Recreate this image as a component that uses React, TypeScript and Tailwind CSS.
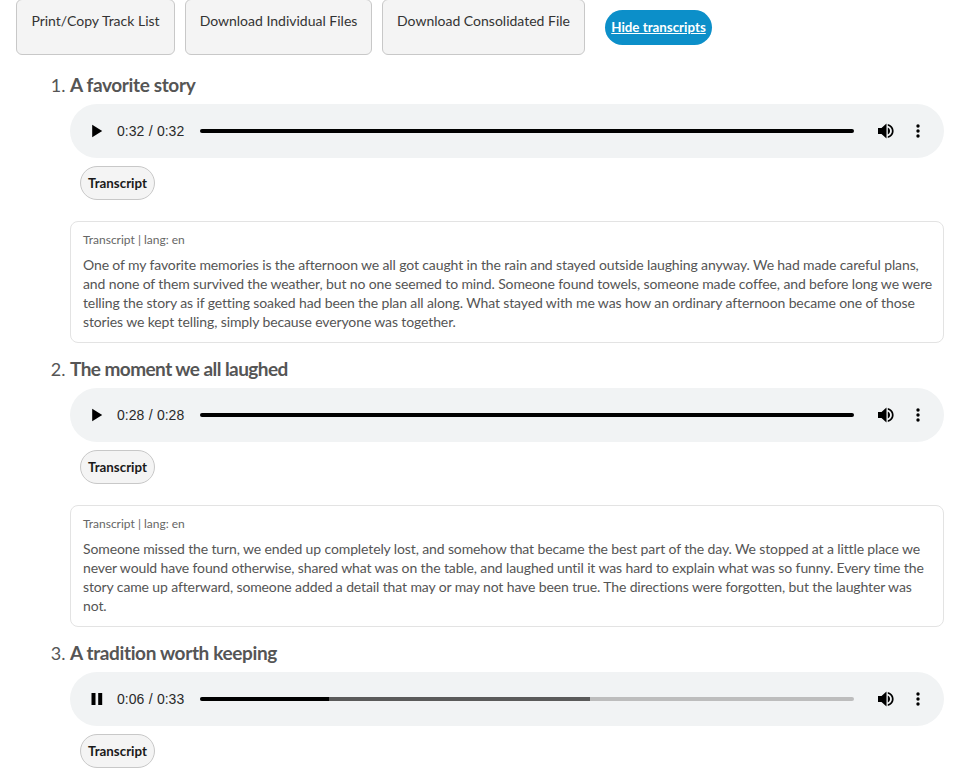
const btn = "h-14 pt-[12px] self-start flex justify-center items-start whitespace-nowrap bg-[#f4f4f4] border border-[#c8c8c8] rounded-[6px] text-[14px] leading-[18px] text-[#333333]";

function Play() {
  return (
    <svg width="12" height="14" viewBox="0 0 12 14" className="shrink-0">
      <path d="M1.2 0.8 L11.2 7 L1.2 13.2 Z" fill="#000" />
    </svg>
  );
}
function Pause() {
  return (
    <svg width="12" height="14" viewBox="0 0 12 14" className="shrink-0">
      <path d="M0.5 1 H4.5 V13 H0.5 Z M7.2 1 H11.2 V13 H7.2 Z" fill="#000" />
    </svg>
  );
}
function Volume() {
  return (
    <svg width="18" height="18" viewBox="0 0 18 18" className="shrink-0">
      <path d="M1 6 H4.5 L9.5 1.5 V16.5 L4.5 12 H1 Z" fill="#000" />
      <path d="M10.8 5.4 C12.4 6.3 13 7.6 13 9 C13 10.4 12.4 11.7 10.8 12.6 Z" fill="#000" />
      <path d="M10.8 2 C14.3 2.8 16.6 5.6 16.6 9 C16.6 12.4 14.3 15.2 10.8 16 V14.2 C13.3 13.4 14.9 11.4 14.9 9 C14.9 6.6 13.3 4.6 10.8 3.8 Z" fill="#000" />
    </svg>
  );
}
function Dots() {
  return (
    <svg width="4" height="14" viewBox="0 0 4 14" className="shrink-0">
      <circle cx="2" cy="2" r="1.7" fill="#000" />
      <circle cx="2" cy="7" r="1.7" fill="#000" />
      <circle cx="2" cy="12" r="1.7" fill="#000" />
    </svg>
  );
}

function Player({ time, total, playing }: { time: string; total: string; playing?: boolean }) {
  return (
    <div className="h-[54px] w-[874px] rounded-[27px] bg-[#f1f3f4] flex items-center pl-[21px] pr-[24px]">
      {playing ? <Pause /> : <Play />}
      <span className="ml-[14px] w-[68px] shrink-0 text-[14px] text-[#2a2a2a] whitespace-pre [word-spacing:0.5px] font-['Liberation_Sans',sans-serif]">
        {time} / {total}
      </span>
      <div className="ml-[15px] flex-1 h-1 rounded-full overflow-hidden flex bg-[#bdbdbd]">
        {playing ? (
          <>
            <div className="w-[129px] bg-black" />
            <div className="w-[261px] bg-[#5a5a5a]" />
          </>
        ) : (
          <div className="w-full bg-black" />
        )}
      </div>
      <div className="ml-[23px]">
        <Volume />
      </div>
      <div className="ml-[21px]">
        <Dots />
      </div>
    </div>
  );
}

function TranscriptButton() {
  return (
    <button className="mt-2 ml-[10px] block h-[34px] w-[75px] pt-px rounded-[17px] bg-[#f4f4f4] border border-[#c8c8c8] text-[13.33px] font-bold text-[#1a1a1a] leading-none">
      Transcript
    </button>
  );
}

function Item({ title, titleClass, time, total, playing, lines }: { title: string; titleClass: string; time: string; total: string; playing?: boolean; lines?: string }) {
  return (
    <li className="text-[19px] leading-[28px] text-[#555555] pb-[12px] marker:text-[18px]">
      <h3 className={`font-bold text-[19px] leading-[28px] text-[#555555] mb-[5px] ${titleClass}`}>{title}</h3>
      <Player time={time} total={total} playing={playing} />
      <TranscriptButton />
      {lines && (
        <div className="mt-[21px] w-[874px] border border-[#e3e3e3] rounded-[8px] pl-3 pr-2 pt-[9px] pb-[11px]">
          <div className="text-[12px] leading-[17px] text-[#666666]">Transcript | lang: en</div>
          <p className="mt-[7px] text-[14px] leading-[19px] tracking-[-0.12px] text-[#555555]">{lines}</p>
        </div>
      )}
    </li>
  );
}

export default function App() {
  return (
    <div className="w-[960px] h-[780px] overflow-hidden bg-white font-['Lato',sans-serif]">
      <div className="-mt-px pl-4 flex items-start gap-[7px] h-[72px]">
        <button className={`${btn} w-[159px]`}>Print/Copy Track List</button>
        <button className={`${btn} ml-[3px] w-[187px]`}>Download Individual Files</button>
        <button className={`${btn} ml-[3px] w-[203px]`}>Download Consolidated File</button>
        <a href="#" className="ml-[13px] mt-[11px] h-[35px] w-[107px] rounded-[18px] bg-[#0c8fc9] text-white text-[13.33px] font-bold underline flex items-center justify-center">
          Hide transcripts
        </a>
      </div>
      <ol className="list-decimal pl-[70px]">
        <Item
          title="A favorite story"
          titleClass="tracking-[-0.36px]"
          time="0:32"
          total="0:32"
          lines="One of my favorite memories is the afternoon we all got caught in the rain and stayed outside laughing anyway. We had made careful plans, and none of them survived the weather, but no one seemed to mind. Someone found towels, someone made coffee, and before long we were telling the story as if getting soaked had been the plan all along. What stayed with me was how an ordinary afternoon became one of those stories we kept telling, simply because everyone was together."
        />
        <Item
          title="The moment we all laughed"
          titleClass="tracking-[-0.56px]"
          time="0:28"
          total="0:28"
          lines="Someone missed the turn, we ended up completely lost, and somehow that became the best part of the day. We stopped at a little place we never would have found otherwise, shared what was on the table, and laughed until it was hard to explain what was so funny. Every time the story came up afterward, someone added a detail that may or may not have been true. The directions were forgotten, but the laughter was not."
        />
        <Item title="A tradition worth keeping" titleClass="tracking-[-0.36px]" time="0:06" total="0:33" playing />
      </ol>
    </div>
  );
}
